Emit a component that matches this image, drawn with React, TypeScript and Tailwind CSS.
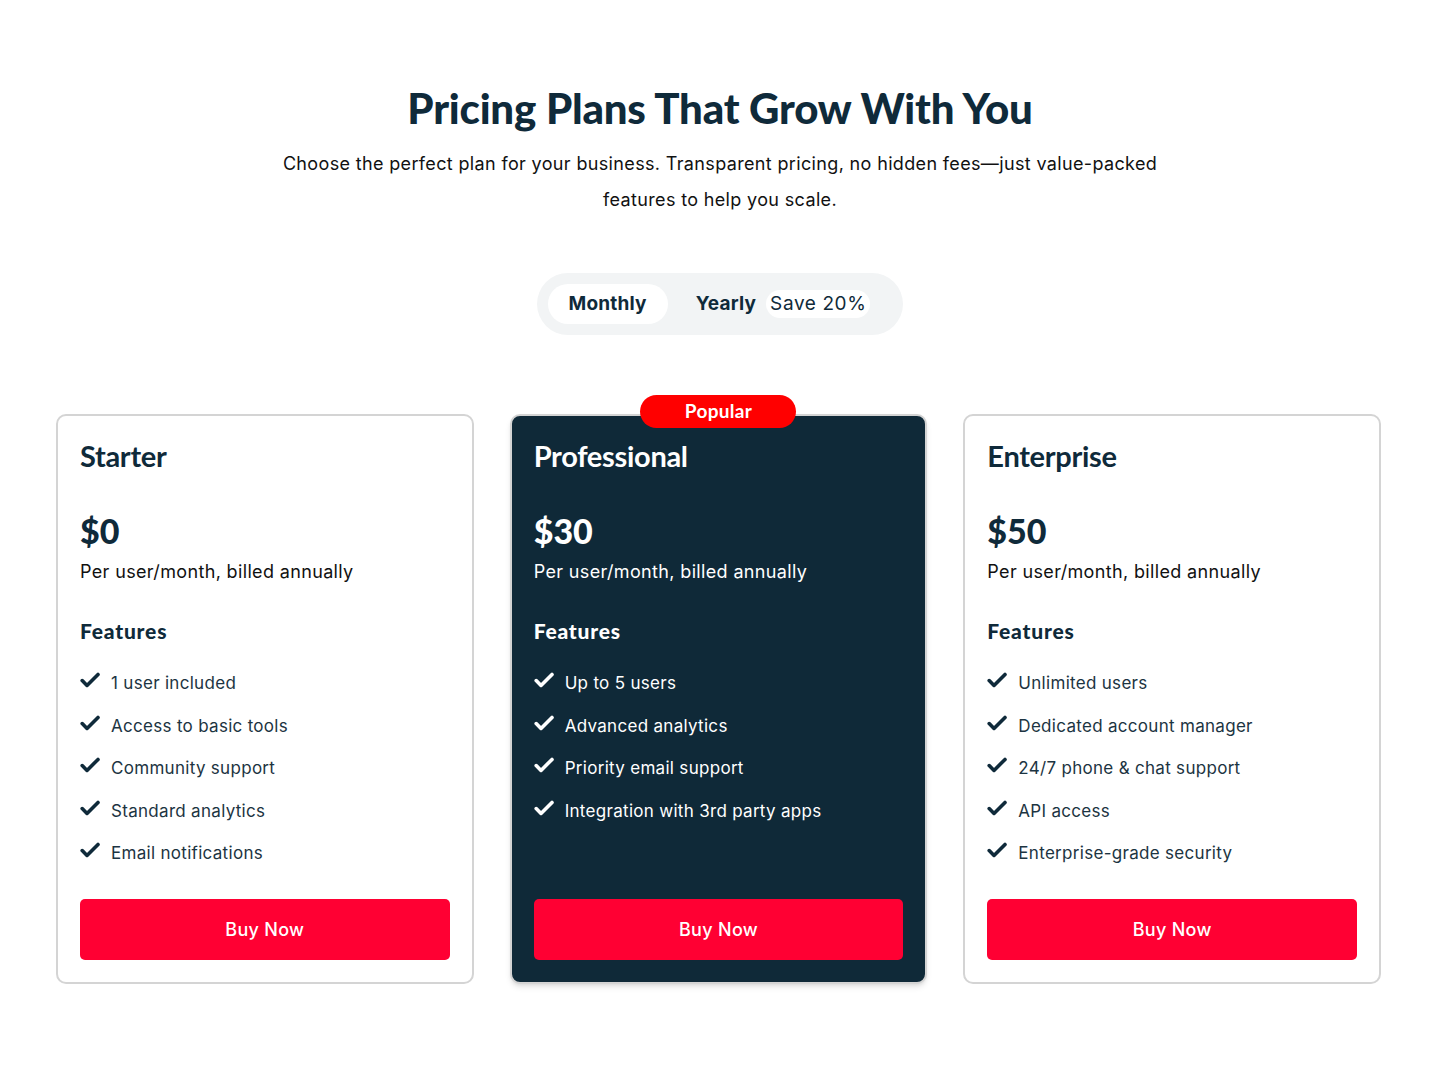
import React from "react";

type Plan = {
  name: string;
  price: string;
  features: string[];
  popular?: boolean;
};

const plans: Plan[] = [
  {
    name: "Starter",
    price: "$0",
    features: [
      "1 user included",
      "Access to basic tools",
      "Community support",
      "Standard analytics",
      "Email notifications",
    ],
  },
  {
    name: "Professional",
    price: "$30",
    popular: true,
    features: [
      "Up to 5 users",
      "Advanced analytics",
      "Priority email support",
      "Integration with 3rd party apps",
    ],
  },
  {
    name: "Enterprise",
    price: "$50",
    features: [
      "Unlimited users",
      "Dedicated account manager",
      "24/7 phone & chat support",
      "API access",
      "Enterprise-grade security",
    ],
  },
];

function CheckIcon(props: React.SVGProps<SVGSVGElement>) {
  return (
    <svg
      {...props}
      xmlns="http://www.w3.org/2000/svg"
      viewBox="0 0 20 16"
      fill="none"
      stroke="currentColor"
      strokeWidth="3.6"
      strokeLinecap="round"
      strokeLinejoin="round"
    >
      <path d="M2.2 8.6l4.8 4.8L18 2.4" />
    </svg>
  );
}

function PlanCard({ plan }: { plan: Plan }) {
  const dark = plan.popular;
  return (
    <div
      className={
        "relative flex flex-col rounded-[10px] border-2 border-[#d4d4d4] px-[22px] pt-[24px] pb-[22px] " +
        (dark ? "bg-[#0f2938] text-white shadow-md" : "bg-white text-[#0f2a3a]")
      }
    >
      {dark && (
        <div className="absolute -top-[21px] left-1/2 -translate-x-1/2 h-[33px] w-[156px] rounded-full bg-[#ff0000] flex items-center justify-center text-[19px] font-bold text-white font-['Lato',sans-serif] tracking-[0.3px]">
          Popular
        </div>
      )}
      <h2 className="text-[29px] leading-[32px] font-bold font-['Lato',sans-serif] tracking-[-0.3px]">
        {plan.name}
      </h2>
      <div className="mt-[39px] text-[34px] leading-[40px] font-black font-['Lato',sans-serif]">
        {plan.price}
      </div>
      <p
        className={
          "mt-[7px] text-[18px] leading-[28px] tracking-[0.35px] font-['Inter',sans-serif] " +
          (dark ? "text-white" : "text-[#111]")
        }
      >
        Per user/month, billed annually
      </p>
      <h3 className="mt-[31px] text-[21px] leading-[28px] font-black tracking-[0.8px] font-['Lato',sans-serif]">
        Features
      </h3>
      <ul className="mt-[25px] flex flex-col gap-[16.5px]">
        {plan.features.map((f) => (
          <li key={f} className="flex items-start gap-[11px]">
            <CheckIcon className="w-[20px] h-[16px] mt-[2px] shrink-0" />
            <span
              className={
                "text-[17px] leading-[26px] tracking-[0.3px] font-['Inter',sans-serif] " +
                (dark ? "text-white" : "text-[#1c3442]")
              }
            >
              {f}
            </span>
          </li>
        ))}
      </ul>
      <div className="flex-1" />
      <button className="mt-[33px] h-[61px] w-full rounded-[5px] bg-[#ff0033] text-white text-[18px] font-medium tracking-[0.3px] font-['Inter',sans-serif]">
        Buy Now
      </button>
    </div>
  );
}

export default function App() {
  return (
    <div className="min-h-screen bg-white text-[#0f2a3a] pt-[84px] pb-[96px]">
      <section className="flex flex-col items-center text-center">
        <h1 className="text-[42px] leading-[48px] font-black tracking-[-0.2px] font-['Lato',sans-serif]">
          Pricing Plans That Grow With You
        </h1>
        <p className="mt-[14px] max-w-[920px] text-[18px] leading-[36px] tracking-[0.35px] text-[#111] font-['Inter',sans-serif]">
          Choose the perfect plan for your business. Transparent pricing, no hidden fees—just value-packed
          features to help you scale.
        </p>
        <div className="mt-[55px] flex items-center rounded-full bg-[#f2f4f5] p-[11px] font-['Inter',sans-serif]">
          <button className="h-[40px] px-[21px] rounded-full bg-white text-[19px] font-bold tracking-[0.2px] text-[#0f2a3a]">
            Monthly
          </button>
          <button className="h-[40px] pl-[28px] pr-[22px] flex items-center gap-[10px] text-[19px] font-bold tracking-[0.2px] text-[#0f2a3a]">
            Yearly
            <span className="h-[28px] px-[4px] flex items-center rounded-full bg-white font-normal tracking-[0.6px]">
              Save 20%
            </span>
          </button>
        </div>
      </section>
      <div className="mt-[79px] pl-[56px] pr-[59px] grid grid-cols-3 gap-[36px]">
        {plans.map((p) => (
          <PlanCard key={p.name} plan={p} />
        ))}
      </div>
    </div>
  );
}
